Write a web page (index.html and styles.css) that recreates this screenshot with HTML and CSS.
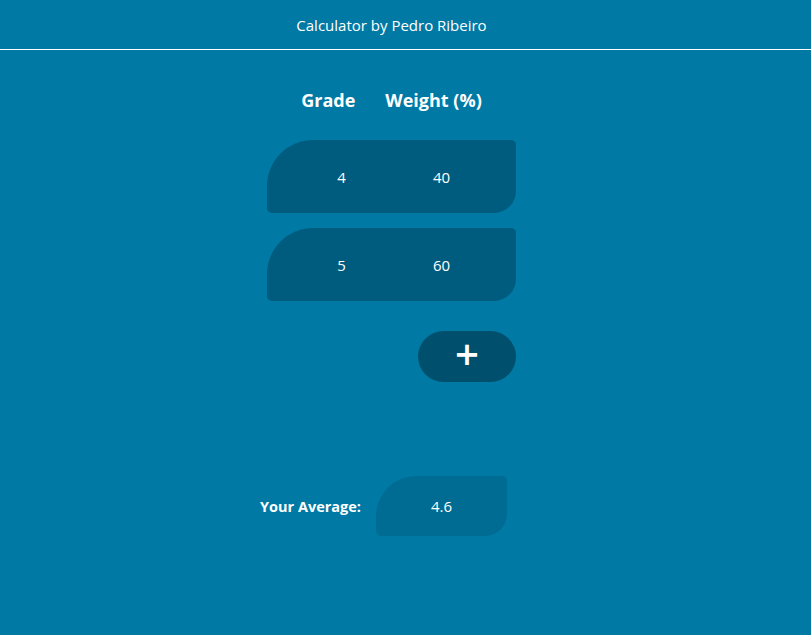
FILE: index.html
```html
<!DOCTYPE html>
<html lang="en">
<head>
<meta charset="utf-8">
<title>Calculator</title>
<link rel="stylesheet" href="styles.css">
</head>
<body>
  <header class="topbar">Calculator by Pedro Ribeiro</header>
  <main class="calc">
    <div class="heads">
      <span class="head-grade">Grade</span>
      <span class="head-weight">Weight (%)</span>
    </div>
    <div class="rows">
      <div class="row"><span class="cell">4</span><span class="cell">40</span></div>
      <div class="row"><span class="cell">5</span><span class="cell">60</span></div>
    </div>
    <div class="add-wrap"><button class="add">+</button></div>
    <div class="result">
      <span class="result-label">Your Average:</span>
      <span class="result-box">4.6</span>
    </div>
  </main>
</body>
</html>
```
FILE: styles.css
```css
html, body {
  margin: 0;
  padding: 0;
}
body {
  background: #0079a5;
  color: #ffffff;
  font-family: "Open Sans", "Noto Sans", sans-serif;
  height: 635px;
}
.topbar {
  height: 49px;
  border-bottom: 1px solid #ffffff;
  display: flex;
  align-items: center;
  justify-content: center;
  font-size: 15px;
  padding-right: 28px;
}
.calc {
  display: flex;
  flex-direction: column;
  align-items: center;
  padding-right: 28px;
}
.heads {
  margin-top: 36px;
  display: flex;
  gap: 30px;
  font-weight: 700;
  font-size: 18px;
  height: 28px;
  align-items: center;
}
.rows {
  margin-top: 26px;
  display: flex;
  flex-direction: column;
  gap: 15px;
}
.row {
  width: 249px;
  height: 73px;
  background: #005c7e;
  border-radius: 46px 5px 22px 5px;
  display: flex;
  align-items: center;
  justify-content: center;
  font-size: 15px;
}
.cell {
  width: 100px;
  text-align: center;
}
.add-wrap {
  width: 249px;
  display: flex;
  justify-content: flex-end;
  margin-top: 30px;
}
.add {
  width: 98px;
  height: 51px;
  border: none;
  border-radius: 26px;
  background: #00506d;
  color: #ffffff;
  font-family: "Open Sans", sans-serif;
  font-size: 42px;
  font-weight: 600;
  line-height: 1;
  padding: 0 0 5px 0;
  cursor: pointer;
}
.result {
  margin-top: 94px;
  display: flex;
  align-items: center;
  gap: 15px;
  margin-left: -16px;
}
.result-label {
  font-weight: 700;
  font-size: 14.5px;
}
.result-box {
  width: 131px;
  height: 60px;
  background: #006c93;
  border-radius: 40px 5px 22px 5px;
  display: flex;
  align-items: center;
  justify-content: center;
  font-size: 15px;
}
```
